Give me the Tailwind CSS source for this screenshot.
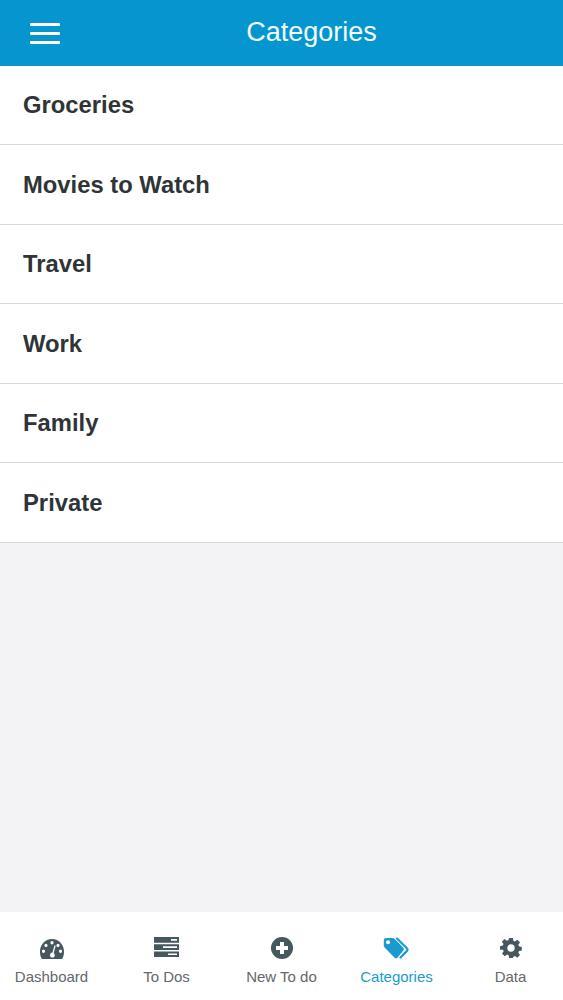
<!DOCTYPE html>
<html lang="en">
<head>
    <meta charset="utf-8">
    <meta name="viewport" content="width=device-width, initial-scale=1.0">
    <title>Categories</title>
    <script src="https://cdn.jsdelivr.net/npm/@tailwindcss/browser@4"></script>
</head>
<body class="bg-[#f3f3f6] font-['Liberation_Sans',Arial,sans-serif]">
    <div class="flex flex-col h-[1000px] w-[563px] overflow-hidden">
        <!-- Header -->
        <header class="h-[66px] shrink-0 bg-[#0696cf] flex items-center relative">
            <button class="ml-[30px] flex flex-col gap-[6px] w-[30px]">
                <span class="block h-[3px] bg-white rounded-[1px]"></span>
                <span class="block h-[3px] bg-white rounded-[1px]"></span>
                <span class="block h-[3px] bg-white rounded-[1px]"></span>
            </button>
            <h1 class="absolute left-0 right-0 text-center text-[#f2fafd] text-[27px] leading-[32px] pl-[60px] -mt-[3px]">Categories</h1>
        </header>

        <!-- List -->
        <ul class="bg-white -mt-[0.5px]">
            <li class="h-[79.5px] pl-[23px] pt-[0.5px] flex items-center border-b border-[#d5d7d9] text-[23.8px] font-bold text-[#2f3437]">Groceries</li>
            <li class="h-[79.5px] pl-[23px] pt-[0.5px] flex items-center border-b border-[#d5d7d9] text-[23.8px] font-bold text-[#2f3437]">Movies to Watch</li>
            <li class="h-[79.5px] pl-[23px] pt-[0.5px] flex items-center border-b border-[#d5d7d9] text-[23.8px] font-bold text-[#2f3437]">Travel</li>
            <li class="h-[79.5px] pl-[23px] pt-[0.5px] flex items-center border-b border-[#d5d7d9] text-[23.8px] font-bold text-[#2f3437]">Work</li>
            <li class="h-[79.5px] pl-[23px] pt-[0.5px] flex items-center border-b border-[#d5d7d9] text-[23.8px] font-bold text-[#2f3437]">Family</li>
            <li class="h-[79.5px] pl-[23px] pt-[0.5px] flex items-center border-b border-[#d5d7d9] text-[23.8px] font-bold text-[#2f3437]">Private</li>
        </ul>
        <div class="flex-1"></div>

        <!-- Tab bar -->
        <nav class="h-[88px] shrink-0 bg-white grid grid-cols-[repeat(5,115px)] justify-center text-[15px] leading-[18px] text-[#63686b]">
            <a class="flex flex-col items-center pt-[25px]">
                <div class="h-[23px] pt-[2px]">
                    <svg class="w-[24px] h-[20px] text-[#46575e]" viewBox="1 2 24 19" preserveAspectRatio="none" fill="currentColor"><path fill-rule="evenodd" d="M13 2C6 2 1 7.500 1 14c0 2.500.6 4.600 1.600 6.500.3.400.7.500 1.200.500h18.400c.5 0 .9-.1 1.200-.5 1-1.900 1.600-4 1.600-6.500C25 7.500 20 2 13 2zM13 4a1.600 1.600 0 1 1 0 3.200 1.600 1.600 0 0 1 0-3.200zM7 6.500a1.600 1.600 0 1 1 0 3.200 1.600 1.600 0 0 1 0-3.200zM19 6.500a1.600 1.600 0 1 1 0 3.200 1.600 1.600 0 0 1 0-3.200zM4.500 12a1.600 1.600 0 1 1 0 3.200 1.600 1.600 0 0 1 0-3.200zM21.500 12a1.600 1.600 0 1 1 0 3.200 1.600 1.600 0 0 1 0-3.200zM15.500 8l1.200.4-2 7c.7.500 1 1.200 1 2 0 1.300-1 2.200-2.200 2.200s-2.500-1-2.500-2.200c0-1.300 1-2.400 2.500-2.500z"/></svg>
                </div>
                <span class="mt-[8px]">Dashboard</span>
            </a>
            <a class="flex flex-col items-center pt-[25px]">
                <div class="h-[23px]">
                    <svg class="w-[25px] h-[20px] text-[#46575e]" viewBox="0 0 25 20" fill="currentColor"><path fill-rule="evenodd" d="M0 0h25v5.700H0zM17 2v1.700h6V2zM0 7.300h25V13H0zM9 9.300V11h14V9.300zM0 14.500h25V20H0zM14 16.400v1.700h9v-1.700z"/></svg>
                </div>
                <span class="mt-[8px]">To Dos</span>
            </a>
            <a class="flex flex-col items-center pt-[25px]">
                <div class="h-[23px]">
                    <svg class="w-[22px] h-[22px] text-[#46575e]" viewBox="0 0 22 22" fill="currentColor"><path fill-rule="evenodd" d="M11 0a11 11 0 1 1 0 22 11 11 0 0 1 0-22zM9 5v4H5v4h4v4h4v-4h4V9h-4V5z"/></svg>
                </div>
                <span class="mt-[8px]">New To do</span>
            </a>
            <a class="flex flex-col items-center pt-[25px] text-[#1a9bd0]">
                <div class="h-[23px]">
                    <svg class="w-[26px] h-[22px] -ml-[1px]" viewBox="0 0 26 22" fill="currentColor"><path fill-rule="evenodd" d="M.8 3.200C.8 2 1.800 1 3 1h6.500c.8 0 1.400.3 2 .8l8.800 8.900c.8.800.8 2.100 0 2.900L14.500 20.700c-.8.800-2.100.8-2.900 0L1.600 10.400C1.100 9.900.8 9.200.8 8.400zM5 3.200a2 2 0 1 0 0 4 2 2 0 0 0 0-4z"/><path fill="none" stroke="currentColor" stroke-width="2.200" stroke-linecap="round" d="M14 1.500l9.800 9.800c.8.800.8 2 0 2.800L17.500 20.500"/></svg>
                </div>
                <span class="mt-[8px]">Categories</span>
            </a>
            <a class="flex flex-col items-center pt-[25px] pr-[2px]">
                <div class="h-[23px]">
                    <svg class="w-[22px] h-[22px] text-[#46575e]" viewBox="0 0 24 24" fill="currentColor"><path fill-rule="evenodd" d="M10 1h4l.6 3.100 1.700.7 2.600-1.800 2.900 2.900-1.800 2.600.7 1.700 3.100.6v4l-3.100.6-.7 1.700 1.800 2.600-2.900 2.900-2.600-1.800-1.700.7L14 23h-4l-.6-3.100-1.700-.7-2.600 1.800-2.900-2.900 1.800-2.600-.7-1.700L0 14v-4l3.100-.6.7-1.700L2 5.100 4.900 2.200l2.600 1.800 1.700-.7zM12 8a4 4 0 1 0 0 8 4 4 0 0 0 0-8z"/></svg>
                </div>
                <span class="mt-[8px]">Data</span>
            </a>
        </nav>
    </div>
</body>
</html>
